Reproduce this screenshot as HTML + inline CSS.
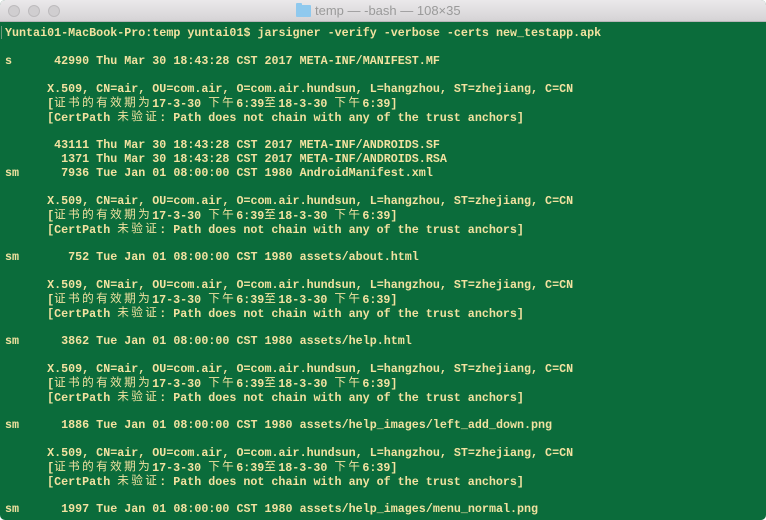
<!DOCTYPE html>
<html><head><meta charset="utf-8"><style>
html,body{margin:0;padding:0;background:#fff;width:766px;height:520px;overflow:hidden}
.win{position:absolute;left:0;top:0;width:766px;height:520px;border-radius:5px;overflow:hidden;background:#0b6c3b}
.tb{height:22px;background:linear-gradient(#ebe9eb,#d5d3d5);border-bottom:1px solid #b8b6b8;box-sizing:border-box;position:relative}
.dot{position:absolute;top:5px;width:12px;height:12px;border-radius:50%;background:#d0ced0;border:1px solid #bdbbbd;box-sizing:border-box}
.title{position:absolute;left:315px;top:3px;font:13px "Liberation Sans",sans-serif;color:#9a9a9a}
.fold{position:absolute;left:296px;top:5px;width:15px;height:12px;background:#8fc9ee;border-radius:1px}
.fold:before{content:"";position:absolute;left:0;top:-2px;width:6px;height:3px;background:#8fc9ee;border-radius:1px 1px 0 0}
.t{position:absolute;left:5px;top:26px;font:bold 11.7px/14px "Liberation Mono","Noto Sans CJK SC",monospace;color:#f2e2a0}
.t div{height:14px;white-space:pre;overflow:visible}
.c{font-family:"Noto Sans CJK SC",sans-serif;font-weight:normal;font-size:11.6px;letter-spacing:2.4px;line-height:14px;position:relative;top:-1px}
.cur{position:absolute;left:1px;top:26px;width:1px;height:13px;background:#6f9a7a}
</style></head><body><div class="win">
<div class="tb"><div class="dot" style="left:8px"></div><div class="dot" style="left:28px"></div><div class="dot" style="left:48px"></div><div class="fold"></div><div class="title">temp — -bash — 108×35</div></div>
<div class="cur"></div>
<div class="t">
<div>Yuntai01-MacBook-Pro:temp yuntai01$ jarsigner -verify -verbose -certs new_testapp.apk</div>
<div></div>
<div>s      42990 Thu Mar 30 18:43:28 CST 2017 META-INF/MANIFEST.MF</div>
<div></div>
<div>      X.509, CN=air, OU=com.air, O=com.air.hundsun, L=hangzhou, ST=zhejiang, C=CN</div>
<div>      [<span class="c">证书的有效期为</span>17-3-30 <span class="c">下午</span>6:39<span class="c">至</span>18-3-30 <span class="c">下午</span>6:39]</div>
<div>      [CertPath <span class="c">未验证</span>: Path does not chain with any of the trust anchors]</div>
<div></div>
<div>       43111 Thu Mar 30 18:43:28 CST 2017 META-INF/ANDROIDS.SF</div>
<div>        1371 Thu Mar 30 18:43:28 CST 2017 META-INF/ANDROIDS.RSA</div>
<div>sm      7936 Tue Jan 01 08:00:00 CST 1980 AndroidManifest.xml</div>
<div></div>
<div>      X.509, CN=air, OU=com.air, O=com.air.hundsun, L=hangzhou, ST=zhejiang, C=CN</div>
<div>      [<span class="c">证书的有效期为</span>17-3-30 <span class="c">下午</span>6:39<span class="c">至</span>18-3-30 <span class="c">下午</span>6:39]</div>
<div>      [CertPath <span class="c">未验证</span>: Path does not chain with any of the trust anchors]</div>
<div></div>
<div>sm       752 Tue Jan 01 08:00:00 CST 1980 assets/about.html</div>
<div></div>
<div>      X.509, CN=air, OU=com.air, O=com.air.hundsun, L=hangzhou, ST=zhejiang, C=CN</div>
<div>      [<span class="c">证书的有效期为</span>17-3-30 <span class="c">下午</span>6:39<span class="c">至</span>18-3-30 <span class="c">下午</span>6:39]</div>
<div>      [CertPath <span class="c">未验证</span>: Path does not chain with any of the trust anchors]</div>
<div></div>
<div>sm      3862 Tue Jan 01 08:00:00 CST 1980 assets/help.html</div>
<div></div>
<div>      X.509, CN=air, OU=com.air, O=com.air.hundsun, L=hangzhou, ST=zhejiang, C=CN</div>
<div>      [<span class="c">证书的有效期为</span>17-3-30 <span class="c">下午</span>6:39<span class="c">至</span>18-3-30 <span class="c">下午</span>6:39]</div>
<div>      [CertPath <span class="c">未验证</span>: Path does not chain with any of the trust anchors]</div>
<div></div>
<div>sm      1886 Tue Jan 01 08:00:00 CST 1980 assets/help_images/left_add_down.png</div>
<div></div>
<div>      X.509, CN=air, OU=com.air, O=com.air.hundsun, L=hangzhou, ST=zhejiang, C=CN</div>
<div>      [<span class="c">证书的有效期为</span>17-3-30 <span class="c">下午</span>6:39<span class="c">至</span>18-3-30 <span class="c">下午</span>6:39]</div>
<div>      [CertPath <span class="c">未验证</span>: Path does not chain with any of the trust anchors]</div>
<div></div>
<div>sm      1997 Tue Jan 01 08:00:00 CST 1980 assets/help_images/menu_normal.png</div>
</div>
</div></body></html>
